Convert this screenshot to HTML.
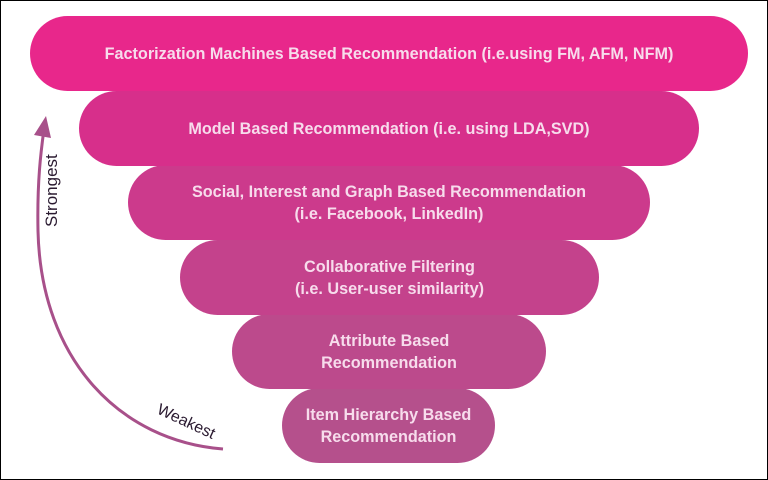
<!DOCTYPE html>
<html><head><style>
html,body{margin:0;padding:0;background:#fff}
#c{position:relative;width:766px;height:478px;border:1px solid #000;overflow:hidden;font-family:"Liberation Sans",sans-serif}
.p{position:absolute;height:75px;border-radius:38px;display:flex;align-items:center;justify-content:center;text-align:center;color:#f7dcec;font-weight:bold;font-size:16.2px;line-height:22px}
</style></head><body><div id="c">
<div class="p" style="left:29px;top:15px;width:718px;background:#e8278b;z-index:6">Factorization Machines Based Recommendation (i.e.using FM, AFM, NFM)</div>
<div class="p" style="left:78px;top:90px;width:620px;background:#d72f8b;z-index:5">Model Based Recommendation (i.e. using LDA,SVD)</div>
<div class="p" style="left:127px;top:164px;width:522px;background:#cc3a8c;z-index:4">Social, Interest and Graph Based Recommendation<br>(i.e. Facebook, LinkedIn)</div>
<div class="p" style="left:179px;top:239px;width:419px;background:#c4428c;z-index:3">Collaborative Filtering<br>(i.e. User-user similarity)</div>
<div class="p" style="left:231px;top:313px;width:314px;background:#bc4a8c;z-index:2">Attribute Based<br>Recommendation</div>
<div class="p" style="left:281px;top:387px;width:213px;background:#b5508c;z-index:1">Item Hierarchy Based<br>Recommendation</div>
<svg style="position:absolute;left:0;top:0" width="766" height="478">
<path d="M222 448 C120 440 40 360 37 230 C36 180 40 150 43 128" fill="none" stroke="#a8508a" stroke-width="3"/>
<polygon points="45,115 33,134 50,137" fill="#a8508a"/>
<text transform="translate(56,226) rotate(-90)" font-family="Liberation Sans,sans-serif" font-size="17" fill="#2a1a30">Strongest</text>
<text transform="translate(155,412) rotate(25)" font-family="Liberation Sans,sans-serif" font-size="16" fill="#2a1a30">Weakest</text>
</svg>
</div></body></html>
